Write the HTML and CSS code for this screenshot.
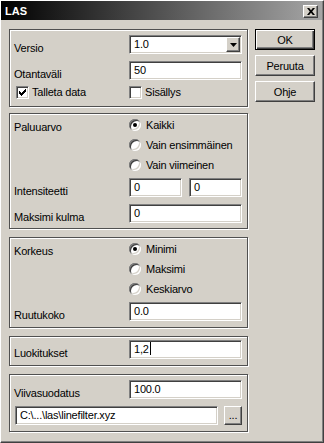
FILE: index.html
```html
<!DOCTYPE html>
<html lang="fi">
<head>
    <meta charset="UTF-8">
    <title>LAS</title>
    <link rel="stylesheet" href="styles.css">
</head>
<body>
    <div class="window">
        <div class="titlebar">
            <span class="title">LAS</span>
            <span class="close-btn">
                <svg width="8" height="7" viewBox="0 0 8 7"><path d="M0 0h2.2l1.8 2.3L5.8 0H8L5.2 3.5 8 7H5.8L4 4.7 2.2 7H0l2.8-3.5z" fill="#000"/></svg>
            </span>
        </div>

        <div class="client">
            <div class="panels">
                <section class="panel panel-general">
                    <div class="row">
                        <span class="lbl">Versio</span>
                        <div class="edit combo">
                            <span class="combo-text">1.0</span>
                            <span class="combo-btn">
                                <svg width="7" height="4" viewBox="0 0 7 4"><path d="M0 0h7L3.5 4z" fill="#000"/></svg>
                            </span>
                        </div>
                    </div>
                    <div class="row gap7">
                        <span class="lbl">Otantaväli</span>
                        <div class="edit">50</div>
                    </div>
                    <div class="row row-check">
                        <span class="check check-first">
                            <span class="checkbox">
                                <svg width="7" height="7" viewBox="0 0 7 7"><path d="M0 2V5H1V6H2V7H3V6H4V5H5V4H6V3H7V0H6V1H5V2H4V3H3V4H2V3H1V2Z" fill="#000"/></svg>
                            </span>
                            Talleta data
                        </span>
                        <span class="check">
                            <span class="checkbox"></span>
                            Sisällys
                        </span>
                    </div>
                </section>

                <section class="panel panel-return">
                    <div class="row row-radio">
                        <span class="lbl">Paluuarvo</span>
                        <span class="option"><span class="radio on"></span>Kaikki</span>
                    </div>
                    <div class="row row-radio">
                        <span class="lbl"></span>
                        <span class="option"><span class="radio"></span>Vain ensimmäinen</span>
                    </div>
                    <div class="row row-radio">
                        <span class="lbl"></span>
                        <span class="option"><span class="radio"></span>Vain viimeinen</span>
                    </div>
                    <div class="row gap3">
                        <span class="lbl">Intensiteetti</span>
                        <div class="pair">
                            <div class="edit">0</div>
                            <div class="edit">0</div>
                        </div>
                    </div>
                    <div class="row gap7">
                        <span class="lbl">Maksimi kulma</span>
                        <div class="edit">0</div>
                    </div>
                </section>

                <section class="panel panel-height">
                    <div class="row row-radio">
                        <span class="lbl">Korkeus</span>
                        <span class="option"><span class="radio on"></span>Minimi</span>
                    </div>
                    <div class="row row-radio">
                        <span class="lbl"></span>
                        <span class="option"><span class="radio"></span>Maksimi</span>
                    </div>
                    <div class="row row-radio">
                        <span class="lbl"></span>
                        <span class="option"><span class="radio"></span>Keskiarvo</span>
                    </div>
                    <div class="row gap3">
                        <span class="lbl">Ruutukoko</span>
                        <div class="edit">0.0</div>
                    </div>
                </section>

                <section class="panel panel-class">
                    <div class="row">
                        <span class="lbl">Luokitukset</span>
                        <div class="edit">1,2<span class="caret"></span></div>
                    </div>
                </section>

                <section class="panel panel-filter">
                    <div class="row">
                        <span class="lbl">Viivasuodatus</span>
                        <div class="edit">100.0</div>
                    </div>
                    <div class="row gap7 row-path">
                        <div class="edit edit-path">C:\...\las\linefilter.xyz</div>
                        <span class="btn btn-browse">...</span>
                    </div>
                </section>
            </div>

            <div class="buttons">
                <span class="btn btn-default">OK</span>
                <span class="btn">Peruuta</span>
                <span class="btn">Ohje</span>
            </div>
        </div>
    </div>
</body>
</html>
```

FILE: styles.css
```css
body {
    margin: 0;
    background: #d4d0c8;
    font-family: "Liberation Sans", Arial, sans-serif;
    font-size: 11px;
    letter-spacing: -0.2px;
    color: #000;
}
.window {
    box-sizing: border-box;
    width: 324px;
    height: 443px;
    background: #d4d0c8;
    border-left: 1px solid #fff;
    border-top: 1px solid #fff;
    border-right: 1px solid #404040;
    border-bottom: 1px solid #404040;
    box-shadow: inset -1px -1px 0 #808080;
    padding: 0 1px 1px 0;
}
.titlebar {
    height: 19px;
    display: flex;
    align-items: flex-start;
    justify-content: space-between;
    padding: 0 4px 0 4px;
    background: linear-gradient(to right, #000 0%, #a6a6a6 100%);
}
.title {
    color: #fff;
    font-weight: bold;
    letter-spacing: 0;
    line-height: 13px;
    margin-top: 4px;
}
.close-btn {
    box-sizing: border-box;
    width: 15px;
    height: 13px;
    margin-top: 4px;
    display: flex;
    align-items: center;
    justify-content: center;
    background: #d4d0c8;
    border: 1px solid;
    border-color: #fff #404040 #404040 #fff;
    box-shadow: inset -1px -1px 0 #808080;
}
.client {
    display: flex;
    gap: 7px;
    padding: 9px 0 0 8px;
}
.panels {
    width: 239px;
    display: flex;
    flex-direction: column;
}
.panel {
    box-sizing: border-box;
    border: 1px solid #505050;
    box-shadow: 1px 1px 0 #fff, inset 1px 1px 0 #fff;
    padding: 0 5px 0 4px;
}
.panel-general {
    padding-top: 5px;
    padding-bottom: 7px;
}
.panel-return {
    margin-top: 6px;
    padding-top: 1px;
    padding-bottom: 5px;
}
.panel-height {
    margin-top: 8px;
    padding-top: 1px;
    padding-bottom: 6px;
}
.panel-class {
    margin-top: 8px;
    padding-top: 3px;
    padding-bottom: 6px;
}
.panel-filter {
    margin-top: 8px;
    padding-top: 5px;
    padding-bottom: 6px;
}
.row {
    display: flex;
    height: 19px;
}
.gap7 {
    margin-top: 7px;
}
.gap3 {
    margin-top: 3px;
}
.lbl {
    width: 115px;
    flex-shrink: 0;
    padding-top: 7px;
    line-height: 13px;
}
.row-radio {
    height: 20px;
}
.row-radio .lbl {
    padding-top: 6px;
}
.edit {
    box-sizing: border-box;
    width: 113px;
    height: 19px;
    background: #fff;
    border: 1px solid;
    border-color: #808080 #fff #fff #808080;
    box-shadow: inset 1px 1px 0 #404040, inset -1px -1px 0 #d4d0c8;
    padding-left: 4px;
    line-height: 17px;
    white-space: nowrap;
    overflow: hidden;
}
.combo {
    display: flex;
    padding-left: 0;
}
.combo-text {
    flex: 1;
    padding-left: 4px;
}
.combo-btn {
    box-sizing: border-box;
    width: 14px;
    height: 15px;
    margin: 1px 1px 1px 0;
    display: flex;
    align-items: center;
    justify-content: center;
    background: #d4d0c8;
    border: 1px solid;
    border-color: #fff #404040 #404040 #fff;
    box-shadow: inset -1px -1px 0 #808080;
}
.caret {
    display: inline-block;
    width: 1px;
    height: 13px;
    background: #000;
    vertical-align: -2px;
    margin-left: 1px;
}
.pair {
    display: flex;
    gap: 7px;
}
.pair .edit {
    width: 53px;
}
.row-check {
    height: 13px;
    margin-top: 6px;
}
.check {
    display: flex;
    align-items: center;
    line-height: 13px;
}
.check-first {
    width: 113px;
    margin-left: 2px;
}
.checkbox {
    box-sizing: border-box;
    width: 13px;
    height: 13px;
    margin-right: 3px;
    display: flex;
    align-items: center;
    justify-content: center;
    background: #fff;
    border: 1px solid;
    border-color: #808080 #fff #fff #808080;
    box-shadow: inset 1px 1px 0 #404040, inset -1px -1px 0 #d4d0c8;
}
.option {
    display: flex;
    align-items: center;
    line-height: 13px;
}
.radio {
    position: relative;
    width: 12px;
    height: 12px;
    margin-right: 5px;
    border-radius: 50%;
    background: #fff;
    box-shadow: inset 1px 1px 0 #808080, inset -1px -1px 0 #fff,
                inset 2px 2px 0 #404040, inset -2px -2px 0 #d4d0c8;
}
.radio.on::after {
    content: "";
    position: absolute;
    left: 4px;
    top: 4px;
    width: 4px;
    height: 4px;
    border-radius: 50%;
    background: #000;
}
.row-path {
    gap: 6px;
}
.edit-path {
    width: 204px;
    margin-left: 1px;
}
.buttons {
    width: 60px;
    display: flex;
    flex-direction: column;
    gap: 5px;
}
.btn {
    box-sizing: border-box;
    width: 60px;
    height: 21px;
    display: flex;
    align-items: center;
    justify-content: center;
    background: #d4d0c8;
    border: 1px solid;
    border-color: #fff #404040 #404040 #fff;
    box-shadow: inset -1px -1px 0 #808080;
}
.btn-default {
    border-color: #000;
    box-shadow: inset 1px 1px 0 #fff, inset -1px -1px 0 #404040, inset -2px -2px 0 #808080;
}
.btn-browse {
    width: 18px;
    height: 19px;
    align-items: flex-end;
    line-height: 13px;
    padding-bottom: 2px;
}
```
